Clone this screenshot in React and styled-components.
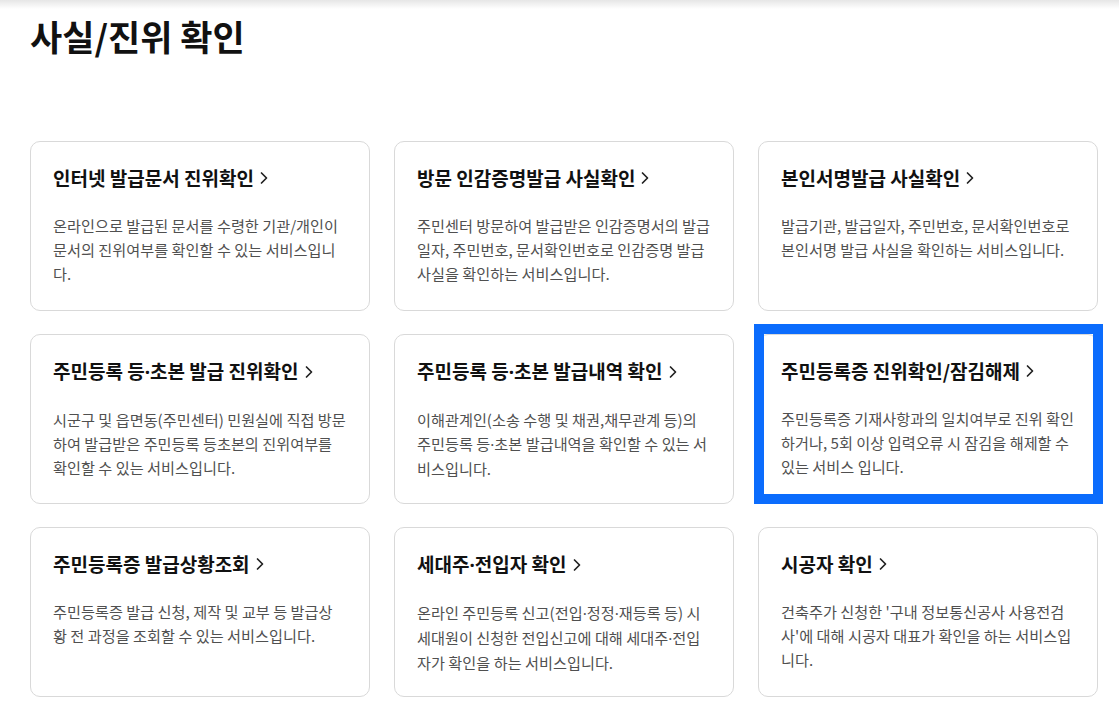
import React from 'react';
import styled, { createGlobalStyle } from 'styled-components';

const GlobalStyle = createGlobalStyle`
  html, body {
    margin: 0;
    padding: 0;
    background: #fff;
  }
  body {
    font-family: "Noto Sans CJK KR", "Noto Sans", sans-serif;
    color: #111;
  }
`;

const Page = styled.div`
  width: 1119px;
  height: 714px;
  overflow: hidden;
  position: relative;
`;

const TopShade = styled.div`
  height: 9px;
  background: linear-gradient(#e6e6e6, #ffffff);
`;

const Content = styled.main`
  padding: 0 21px 0 30px;
`;

const Heading = styled.h1`
  margin: 3px 0 0;
  font-size: 35px;
  line-height: 48px;
  font-weight: 700;
  letter-spacing: 0;
  color: #111;
`;

const Grid = styled.div`
  margin-top: 81px;
  display: grid;
  grid-template-columns: repeat(3, 340px);
  grid-auto-rows: 170px;
  column-gap: 24px;
  row-gap: 23px;
`;

const Card = styled.a`
  position: relative;
  box-sizing: border-box;
  display: block;
  border: 1px solid #d9d9d9;
  border-radius: 10px;
  padding: 22px 18px 0 22px;
  text-decoration: none;
  color: inherit;
  background: #fff;
`;

// 화면 캡처에 덧그려진 강조 테두리
const Highlight = styled.span`
  position: absolute;
  top: -11px;
  left: -5px;
  right: -6px;
  bottom: -1px;
  border: 10px solid #0b6cfd;
  pointer-events: none;
`;

const Title = styled.h2`
  margin: 0;
  display: flex;
  align-items: center;
  gap: 6px;
  font-size: 19px;
  line-height: 28px;
  font-weight: 700;
  letter-spacing: 0;
  color: #111;
  white-space: nowrap;
`;

const Desc = styled.p`
  margin: 21px 0 0;
  font-size: 15.2px;
  line-height: 24px;
  color: #505050;
`;

const Line = styled.span`
  display: block;
  white-space: nowrap;
`;

// CJK 폰트의 가운뎃점은 너무 넓어서 라틴 폰트로 찍음
const Dot = styled.span`
  font-family: "Noto Sans", "Liberation Sans", sans-serif;
  font-weight: inherit;
`;

const withDots = (text) =>
  text.split('·').map((part, i) => (
    <React.Fragment key={i}>
      {i > 0 && <Dot>·</Dot>}
      {part}
    </React.Fragment>
  ));

const Chevron = () => (
  <svg width="8" height="14" viewBox="0 0 8 14" fill="none">
    <path d="M1.5 2 L6.5 7 L1.5 12" stroke="#222" strokeWidth="1.7" strokeLinecap="round" strokeLinejoin="round" />
  </svg>
);

const services = [
  {
    title: '인터넷 발급문서 진위확인',
    desc: ['온라인으로 발급된 문서를 수령한 기관/개인이', '문서의 진위여부를 확인할 수 있는 서비스입니', '다.'],
  },
  {
    title: '방문 인감증명발급 사실확인',
    desc: ['주민센터 방문하여 발급받은 인감증명서의 발급', '일자, 주민번호, 문서확인번호로 인감증명 발급', '사실을 확인하는 서비스입니다.'],
  },
  {
    title: '본인서명발급 사실확인',
    desc: ['발급기관, 발급일자, 주민번호, 문서확인번호로', '본인서명 발급 사실을 확인하는 서비스입니다.'],
  },
  {
    title: '주민등록 등·초본 발급 진위확인',
    desc: ['시군구 및 읍면동(주민센터) 민원실에 직접 방문', '하여 발급받은 주민등록 등초본의 진위여부를', '확인할 수 있는 서비스입니다.'],
  },
  {
    title: '주민등록 등·초본 발급내역 확인',
    desc: ['이해관계인(소송 수행 및 채권,채무관계 등)의', '주민등록 등·초본 발급내역을 확인할 수 있는 서', '비스입니다.'],
  },
  {
    title: '주민등록증 진위확인/잠김해제',
    desc: ['주민등록증 기재사항과의 일치여부로 진위 확인', '하거나, 5회 이상 입력오류 시 잠김을 해제할 수', '있는 서비스 입니다.'],
    highlighted: true,
  },
  {
    title: '주민등록증 발급상황조회',
    desc: ['주민등록증 발급 신청, 제작 및 교부 등 발급상', '황 전 과정을 조회할 수 있는 서비스입니다.'],
  },
  {
    title: '세대주·전입자 확인',
    desc: ['온라인 주민등록 신고(전입·정정·재등록 등) 시', '세대원이 신청한 전입신고에 대해 세대주·전입', '자가 확인을 하는 서비스입니다.'],
  },
  {
    title: '시공자 확인',
    desc: ["건축주가 신청한 '구내 정보통신공사 사용전검", "사'에 대해 시공자 대표가 확인을 하는 서비스입", '니다.'],
  },
];

export default function App() {
  return (
    <Page>
      <GlobalStyle />
      <TopShade />
      <Content>
        <Heading>사실/진위 확인</Heading>
        <Grid>
          {services.map((s) => (
            <Card key={s.title} href="#">
              <Title>
                <span>{withDots(s.title)}</span>
                <Chevron />
              </Title>
              <Desc>
                {s.desc.map((line, i) => (
                  <Line key={i}>{withDots(line)}</Line>
                ))}
              </Desc>
              {s.highlighted && <Highlight />}
            </Card>
          ))}
        </Grid>
      </Content>
    </Page>
  );
}
